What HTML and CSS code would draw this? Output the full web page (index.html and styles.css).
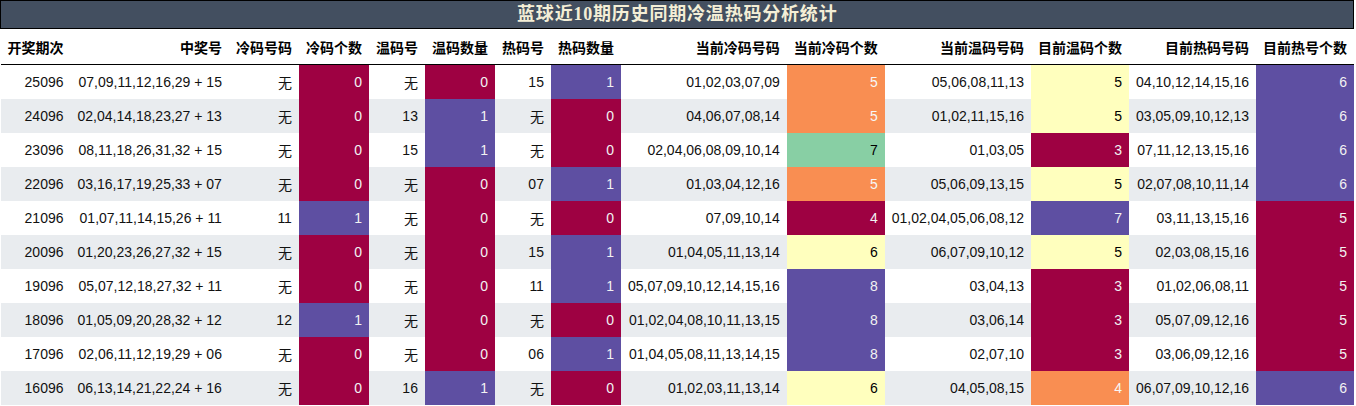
FILE: index.html
```html
<!DOCTYPE html>
<html lang="zh">
<head>
<meta charset="utf-8">
<title>蓝球近10期历史同期冷温热码分析统计</title>
<link rel="stylesheet" href="styles.css">
</head>
<body>
<table class="stats">
<thead>
<tr><th class="title" colspan="14">蓝球近10期历史同期冷温热码分析统计</th></tr>
<tr class="head">
<th>开奖期次</th><th>中奖号</th><th>冷码号码</th><th>冷码个数</th><th>温码号</th><th>温码数量</th><th>热码号</th><th>热码数量</th><th>当前冷码号码</th><th>当前冷码个数</th><th>当前温码号码</th><th>目前温码个数</th><th>目前热码号码</th><th>目前热号个数</th>
</tr>
</thead>
<tbody>
<tr><td>25096</td><td>07,09,11,12,16,29 + 15</td><td>无</td><td class="c">0</td><td>无</td><td class="c">0</td><td>15</td><td class="p">1</td><td>01,02,03,07,09</td><td class="o">5</td><td>05,06,08,11,13</td><td class="y">5</td><td>04,10,12,14,15,16</td><td class="p">6</td></tr>
<tr><td>24096</td><td>02,04,14,18,23,27 + 13</td><td>无</td><td class="c">0</td><td>13</td><td class="p">1</td><td>无</td><td class="c">0</td><td>04,06,07,08,14</td><td class="o">5</td><td>01,02,11,15,16</td><td class="y">5</td><td>03,05,09,10,12,13</td><td class="p">6</td></tr>
<tr><td>23096</td><td>08,11,18,26,31,32 + 15</td><td>无</td><td class="c">0</td><td>15</td><td class="p">1</td><td>无</td><td class="c">0</td><td>02,04,06,08,09,10,14</td><td class="g">7</td><td>01,03,05</td><td class="c">3</td><td>07,11,12,13,15,16</td><td class="p">6</td></tr>
<tr><td>22096</td><td>03,16,17,19,25,33 + 07</td><td>无</td><td class="c">0</td><td>无</td><td class="c">0</td><td>07</td><td class="p">1</td><td>01,03,04,12,16</td><td class="o">5</td><td>05,06,09,13,15</td><td class="y">5</td><td>02,07,08,10,11,14</td><td class="p">6</td></tr>
<tr><td>21096</td><td>01,07,11,14,15,26 + 11</td><td>11</td><td class="p">1</td><td>无</td><td class="c">0</td><td>无</td><td class="c">0</td><td>07,09,10,14</td><td class="c">4</td><td>01,02,04,05,06,08,12</td><td class="p">7</td><td>03,11,13,15,16</td><td class="c">5</td></tr>
<tr><td>20096</td><td>01,20,23,26,27,32 + 15</td><td>无</td><td class="c">0</td><td>无</td><td class="c">0</td><td>15</td><td class="p">1</td><td>01,04,05,11,13,14</td><td class="y">6</td><td>06,07,09,10,12</td><td class="y">5</td><td>02,03,08,15,16</td><td class="c">5</td></tr>
<tr><td>19096</td><td>05,07,12,18,27,32 + 11</td><td>无</td><td class="c">0</td><td>无</td><td class="c">0</td><td>11</td><td class="p">1</td><td>05,07,09,10,12,14,15,16</td><td class="p">8</td><td>03,04,13</td><td class="c">3</td><td>01,02,06,08,11</td><td class="c">5</td></tr>
<tr><td>18096</td><td>01,05,09,20,28,32 + 12</td><td>12</td><td class="p">1</td><td>无</td><td class="c">0</td><td>无</td><td class="c">0</td><td>01,02,04,08,10,11,13,15</td><td class="p">8</td><td>03,06,14</td><td class="c">3</td><td>05,07,09,12,16</td><td class="c">5</td></tr>
<tr><td>17096</td><td>02,06,11,12,19,29 + 06</td><td>无</td><td class="c">0</td><td>无</td><td class="c">0</td><td>06</td><td class="p">1</td><td>01,04,05,08,11,13,14,15</td><td class="p">8</td><td>02,07,10</td><td class="c">3</td><td>03,06,09,12,16</td><td class="c">5</td></tr>
<tr><td>16096</td><td>06,13,14,21,22,24 + 16</td><td>无</td><td class="c">0</td><td>16</td><td class="p">1</td><td>无</td><td class="c">0</td><td>01,02,03,11,13,14</td><td class="y">6</td><td>04,05,08,15</td><td class="o">4</td><td>06,07,09,10,12,16</td><td class="p">6</td></tr>
</tbody>
</table>
</body>
</html>
```

FILE: styles.css
```css
html, body {
  margin: 0;
  padding: 0;
  background: #ffffff;
}

.stats {
  border-collapse: collapse;
  border-spacing: 0;
  font-family: "Liberation Sans", "Noto Sans CJK SC", sans-serif;
  font-size: 14px;
  color: #111111;
}

.stats th,
.stats td {
  padding: 0 7px;
  text-align: right;
  white-space: nowrap;
  vertical-align: middle;
}

.stats .title {
  height: 27px;
  padding: 0;
  text-align: center;
  background: #434f60;
  color: #f4eed6;
  border: 1px solid #000000;
  font-family: "Liberation Serif", "Noto Sans CJK SC", serif;
  font-size: 18px;
  font-weight: bold;
  line-height: 27px;
  letter-spacing: 0.8px;
}

.stats .head th {
  height: 35px;
  font-weight: bold;
  color: #000000;
  border-bottom: 1px solid #000000;
  background: #ffffff;
}

.stats td {
  height: 34px;
  background: #ffffff;
}

.stats tbody tr:nth-child(even) td {
  background: #e9ecef;
}

.stats tbody tr td.c { background: #9e0142; color: #f2f2f2; }
.stats tbody tr td.p { background: #5e4fa2; color: #f2f2f2; }
.stats tbody tr td.o { background: #f98e52; color: #f7f7f7; }
.stats tbody tr td.y { background: #ffffbe; color: #000000; }
.stats tbody tr td.g { background: #88cfa4; color: #000000; }
```
